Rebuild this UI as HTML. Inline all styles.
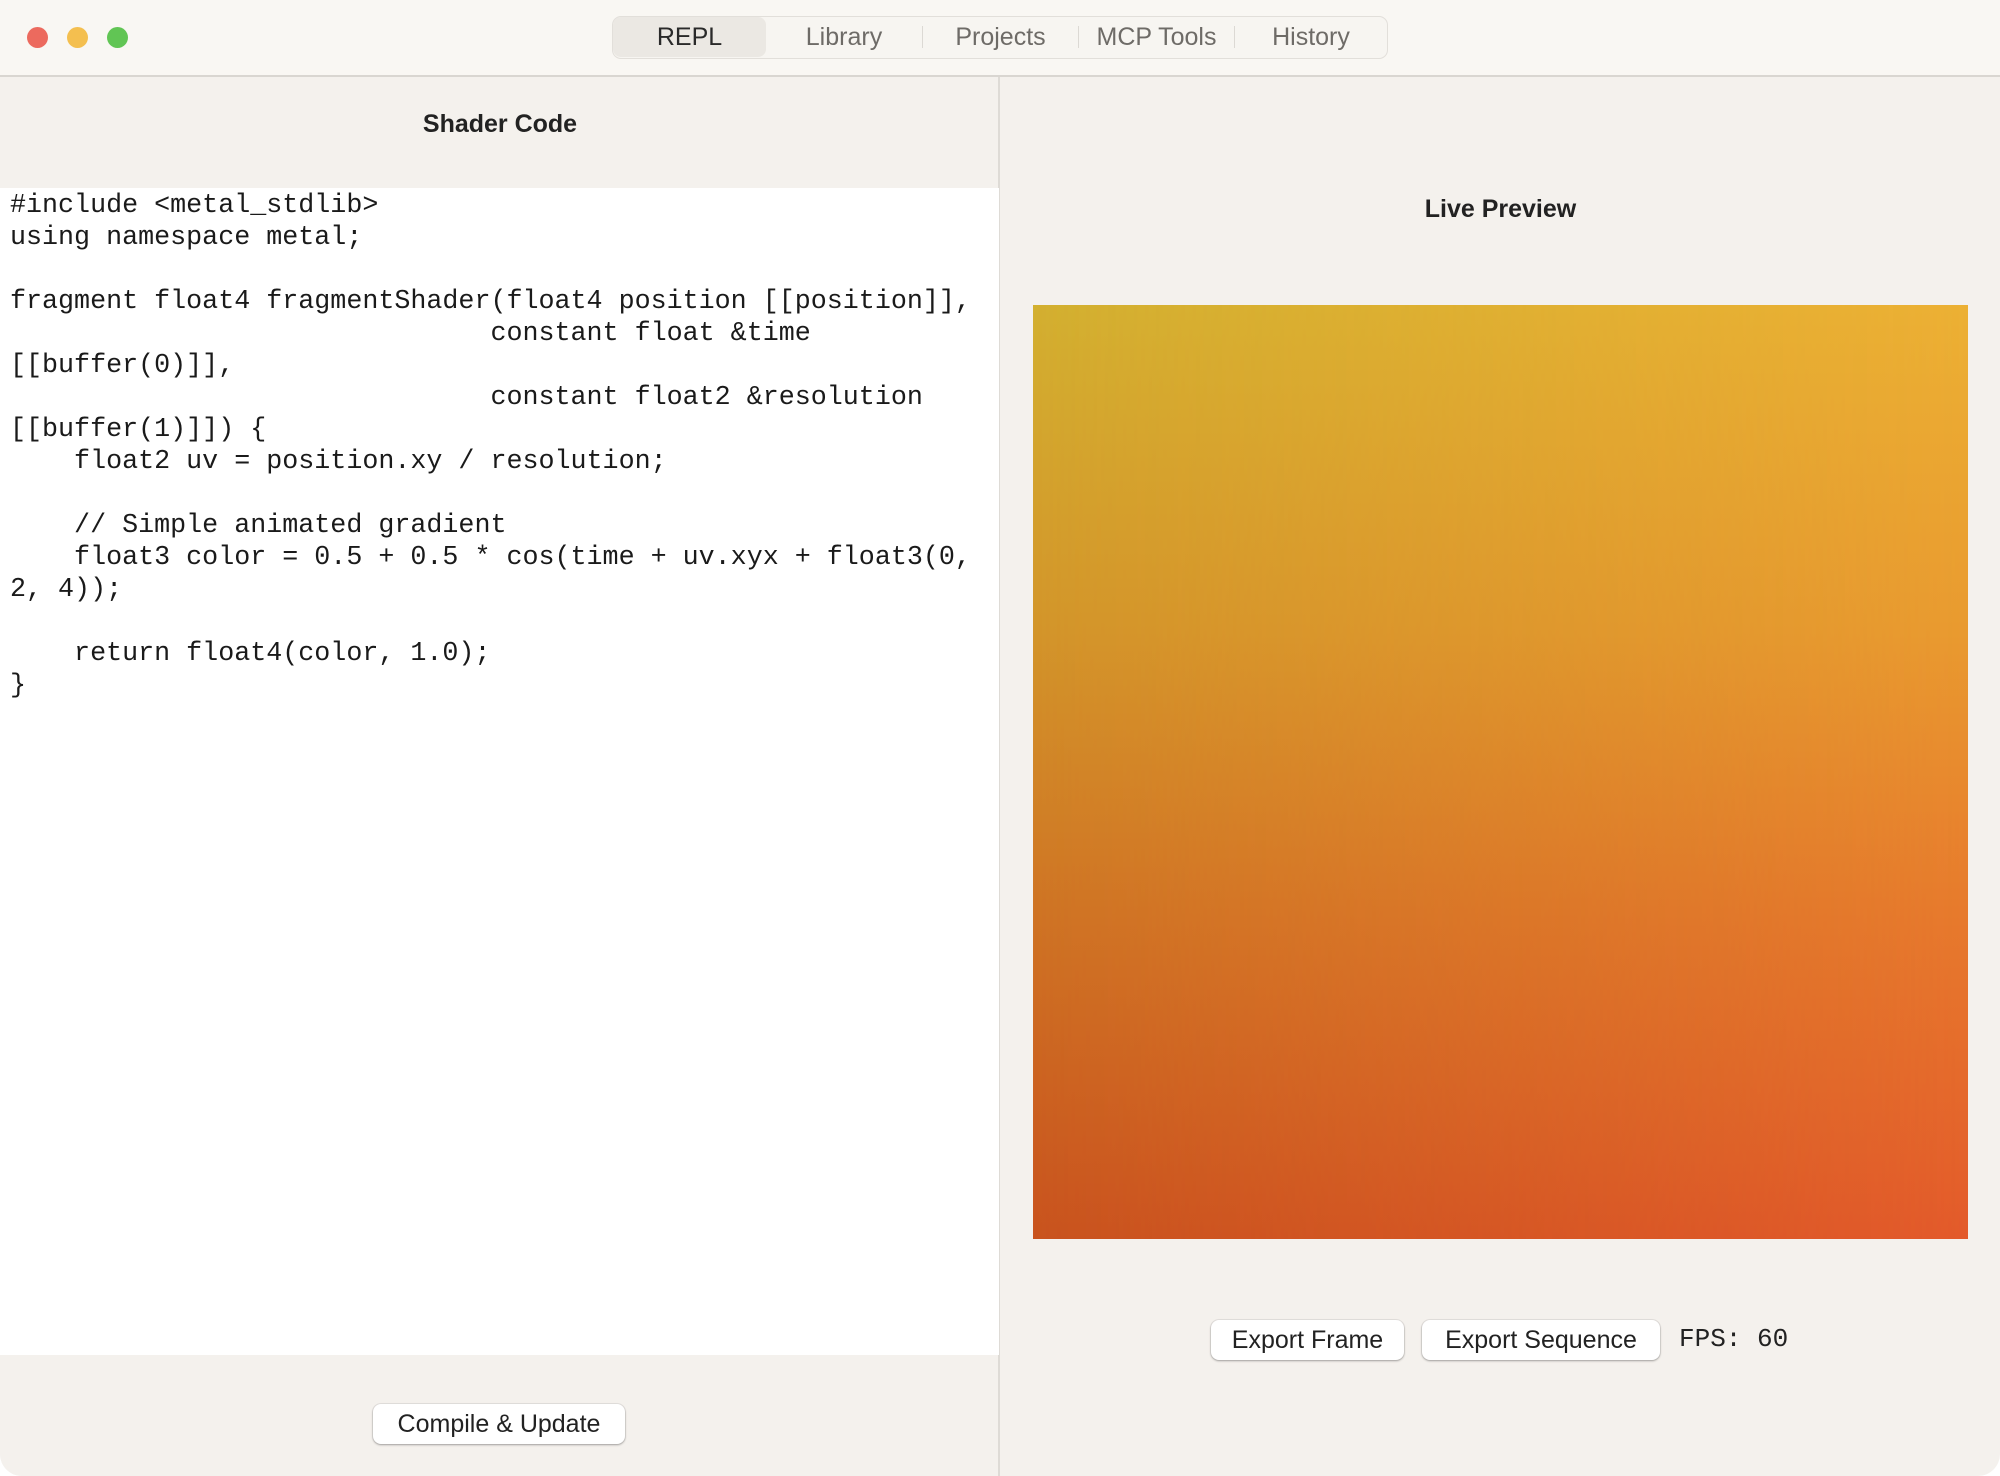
<!DOCTYPE html>
<html><head><meta charset="utf-8"><style>
*{margin:0;padding:0;box-sizing:border-box}
html,body{width:2000px;height:1476px;overflow:hidden;background:#fff}
body{font-family:"Liberation Sans",sans-serif;position:relative}
.win{position:absolute;left:0;top:0;width:2000px;height:1476px;background:#f4f1ed;border-radius:0 0 22px 22px;overflow:hidden}
.title{position:absolute;left:0;top:0;width:2000px;height:77px;background:#f9f7f3;border-bottom:2px solid #d9d6d1}
.dot{position:absolute;top:27px;width:21px;height:21px;border-radius:50%}
.tabs{position:absolute;left:612px;top:16px;width:776px;height:43px;border:1.5px solid #e2dfda;border-radius:9px;background:#f7f5f1}
.tab{position:absolute;top:0;height:40px;line-height:40px;text-align:center;font-size:25px;color:#6e6b67}
.sel{background:#ebe8e3;border-radius:8px;color:#2a2a2a}
.sep{position:absolute;top:9px;width:1px;height:22px;background:#dcd9d4}
.left{position:absolute;left:0;top:77px;width:1000px;height:1399px;background:#f4f1ed;border-right:2px solid #dedbd6}
h2{position:absolute;font-size:25px;font-weight:bold;color:#222;text-align:center}
.code{position:absolute;left:0;top:188px;width:999px;height:1167px;background:#fff}
pre{position:absolute;left:10px;top:2px;font-family:"Liberation Mono",monospace;font-size:26.7px;line-height:32px;color:#1a1a1a}
.btn{position:absolute;height:40px;background:#fff;border-radius:8px;box-shadow:0 1px 2px rgba(0,0,0,.3),0 0 0 1px rgba(0,0,0,.06);font-size:25px;line-height:40px;text-align:center;color:#222}
.prev{position:absolute;left:1033px;top:305px;width:935px;height:934px;background:linear-gradient(180deg,#d3b030 0%,#d3952a 35%,#cf7424 65%,#c9531e 100%)}
.prev2{position:absolute;inset:0;background:linear-gradient(180deg,#ecb034 0%,#e99a30 35%,#e77a2d 65%,#e35a2b 100%);-webkit-mask-image:linear-gradient(90deg,transparent,#000);mask-image:linear-gradient(90deg,transparent,#000)}
</style></head><body>
<div class="win">
<div class="title">
<div class="dot" style="left:27px;background:#ec6a5e"></div>
<div class="dot" style="left:67px;background:#f4bf4f"></div>
<div class="dot" style="left:107px;background:#61c554"></div>
<div class="tabs">
<div class="tab sel" style="left:0;width:153px">REPL</div>
<div class="tab" style="left:153px;width:156px">Library</div>
<div class="sep" style="left:309px"></div>
<div class="tab" style="left:310px;width:155px">Projects</div>
<div class="sep" style="left:465px"></div>
<div class="tab" style="left:466px;width:155px">MCP Tools</div>
<div class="sep" style="left:621px"></div>
<div class="tab" style="left:622px;width:152px">History</div>
</div>
</div>
<div class="left">
<h2 style="left:0;width:1000px;top:33px">Shader Code</h2>
</div>
<div class="code"><pre>#include &lt;metal_stdlib&gt;
using namespace metal;

fragment float4 fragmentShader(float4 position [[position]],
                              constant float &amp;time
[[buffer(0)]],
                              constant float2 &amp;resolution
[[buffer(1)]]) {
    float2 uv = position.xy / resolution;

    // Simple animated gradient
    float3 color = 0.5 + 0.5 * cos(time + uv.xyx + float3(0,
2, 4));

    return float4(color, 1.0);
}</pre></div>
<div class="btn" style="left:373px;top:1404px;width:252px">Compile &amp; Update</div>
<h2 style="left:1001px;width:999px;top:195px">Live Preview</h2>
<div class="prev"><div class="prev2"></div></div>
<div class="btn" style="left:1211px;top:1320px;width:193px">Export Frame</div>
<div class="btn" style="left:1422px;top:1320px;width:238px">Export Sequence</div>
<div style="position:absolute;left:1679px;top:1324px;font-family:'Liberation Mono',monospace;font-size:26px;color:#222">FPS: 60</div>
</div>
</body></html>
